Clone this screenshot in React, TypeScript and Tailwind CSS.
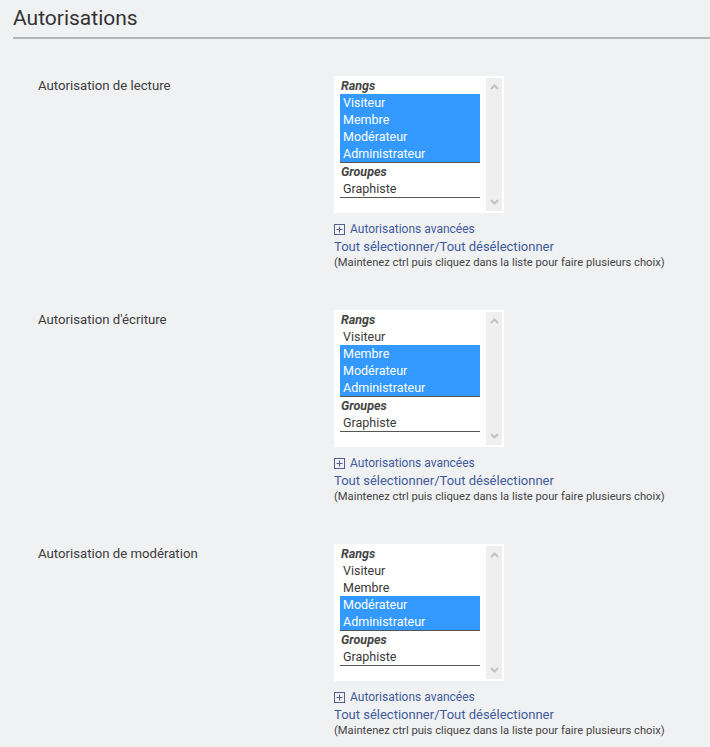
import React from 'react';

type Row = { label: string; selected: boolean };

const sections: { title: string; rangs: Row[] }[] = [
  {
    title: 'Autorisation de lecture',
    rangs: [
      { label: 'Visiteur', selected: true },
      { label: 'Membre', selected: true },
      { label: 'Modérateur', selected: true },
      { label: 'Administrateur', selected: true },
    ],
  },
  {
    title: "Autorisation d'écriture",
    rangs: [
      { label: 'Visiteur', selected: false },
      { label: 'Membre', selected: true },
      { label: 'Modérateur', selected: true },
      { label: 'Administrateur', selected: true },
    ],
  },
  {
    title: 'Autorisation de modération',
    rangs: [
      { label: 'Visiteur', selected: false },
      { label: 'Membre', selected: false },
      { label: 'Modérateur', selected: true },
      { label: 'Administrateur', selected: true },
    ],
  },
];

const Chevron = ({ up }: { up?: boolean }) => (
  <svg width="9" height="6" viewBox="0 0 9 6" className="block">
    <path
      d={up ? 'M1 5 L4.5 1.5 L8 5' : 'M1 1 L4.5 4.5 L8 1'}
      fill="none"
      stroke="#c2c2c2"
      strokeWidth="2"
    />
  </svg>
);

const PlusBox = () => (
  <svg width="11" height="11" viewBox="0 0 11 11" className="block">
    <rect x="0.5" y="0.5" width="10" height="10" fill="none" stroke="#53618f" />
    <path d="M5.5 2.5 V8.5 M2.5 5.5 H8.5" stroke="#53618f" />
  </svg>
);

const Option = ({ row }: { row: Row }) => (
  <div
    className={
      'h-[17px] leading-[17px] pl-[3px] ' +
      (row.selected ? 'bg-[#3399ff] text-white' : 'text-[#3a3a3a]')
    }
  >
    {row.label}
  </div>
);

const ListBox = ({ rangs }: { rangs: Row[] }) => (
  <div className="flex w-[170px] h-[137px] bg-white pt-[1px] px-[2px] pb-[2px]">
    <div className="flex-1 pl-[4px] pr-[6px] text-[12.5px]">
      <div className="border-b border-[#555]">
        <div className="h-[17px] leading-[17px] pl-[1px] font-bold italic text-[#444]">Rangs</div>
        {rangs.map((r) => (
          <Option key={r.label} row={r} />
        ))}
      </div>
      <div className="border-b border-[#555]">
        <div className="h-[17px] leading-[17px] pl-[1px] font-bold italic text-[#444]">Groupes</div>
        <Option row={{ label: 'Graphiste', selected: false }} />
      </div>
    </div>
    <div className="w-[16px] mt-[1px] bg-[#efefef] flex flex-col justify-between items-center py-[6px]">
      <Chevron up />
      <Chevron />
    </div>
  </div>
);

export default function App() {
  return (
    <div
      className="min-h-screen bg-[#f0f1f3] text-[#3a3a3a]"
      style={{ fontFamily: 'Roboto, "Liberation Sans", sans-serif' }}
    >
      <div className="pl-[13px] pt-[4px]">
        <h2 className="text-[21px] leading-[28px] text-[#333] pb-[5px] border-b-2 border-[#b4b4b4]">
          Autorisations
        </h2>
      </div>
      <div className="pt-[37px]">
        {sections.map((s) => (
          <div key={s.title} className="flex h-[234px]">
            <div className="w-[334px] pl-[38px] pt-[1px] text-[13.2px] leading-[17px] text-[#3c3c3c]">
              {s.title}
            </div>
            <div>
              <ListBox rangs={s.rangs} />
              <div className="pt-[8px] leading-[17px] text-[#3f5b9b]">
                <div className="flex items-center gap-[5px] text-[12px]">
                  <PlusBox />
                  <span>Autorisations avancées</span>
                </div>
                <div className="text-[13px]">Tout sélectionner/Tout désélectionner</div>
              </div>
              <div className="text-[11.2px] leading-[15px] text-[#444]">
                (Maintenez ctrl puis cliquez dans la liste pour faire plusieurs choix)
              </div>
            </div>
          </div>
        ))}
      </div>
    </div>
  );
}
